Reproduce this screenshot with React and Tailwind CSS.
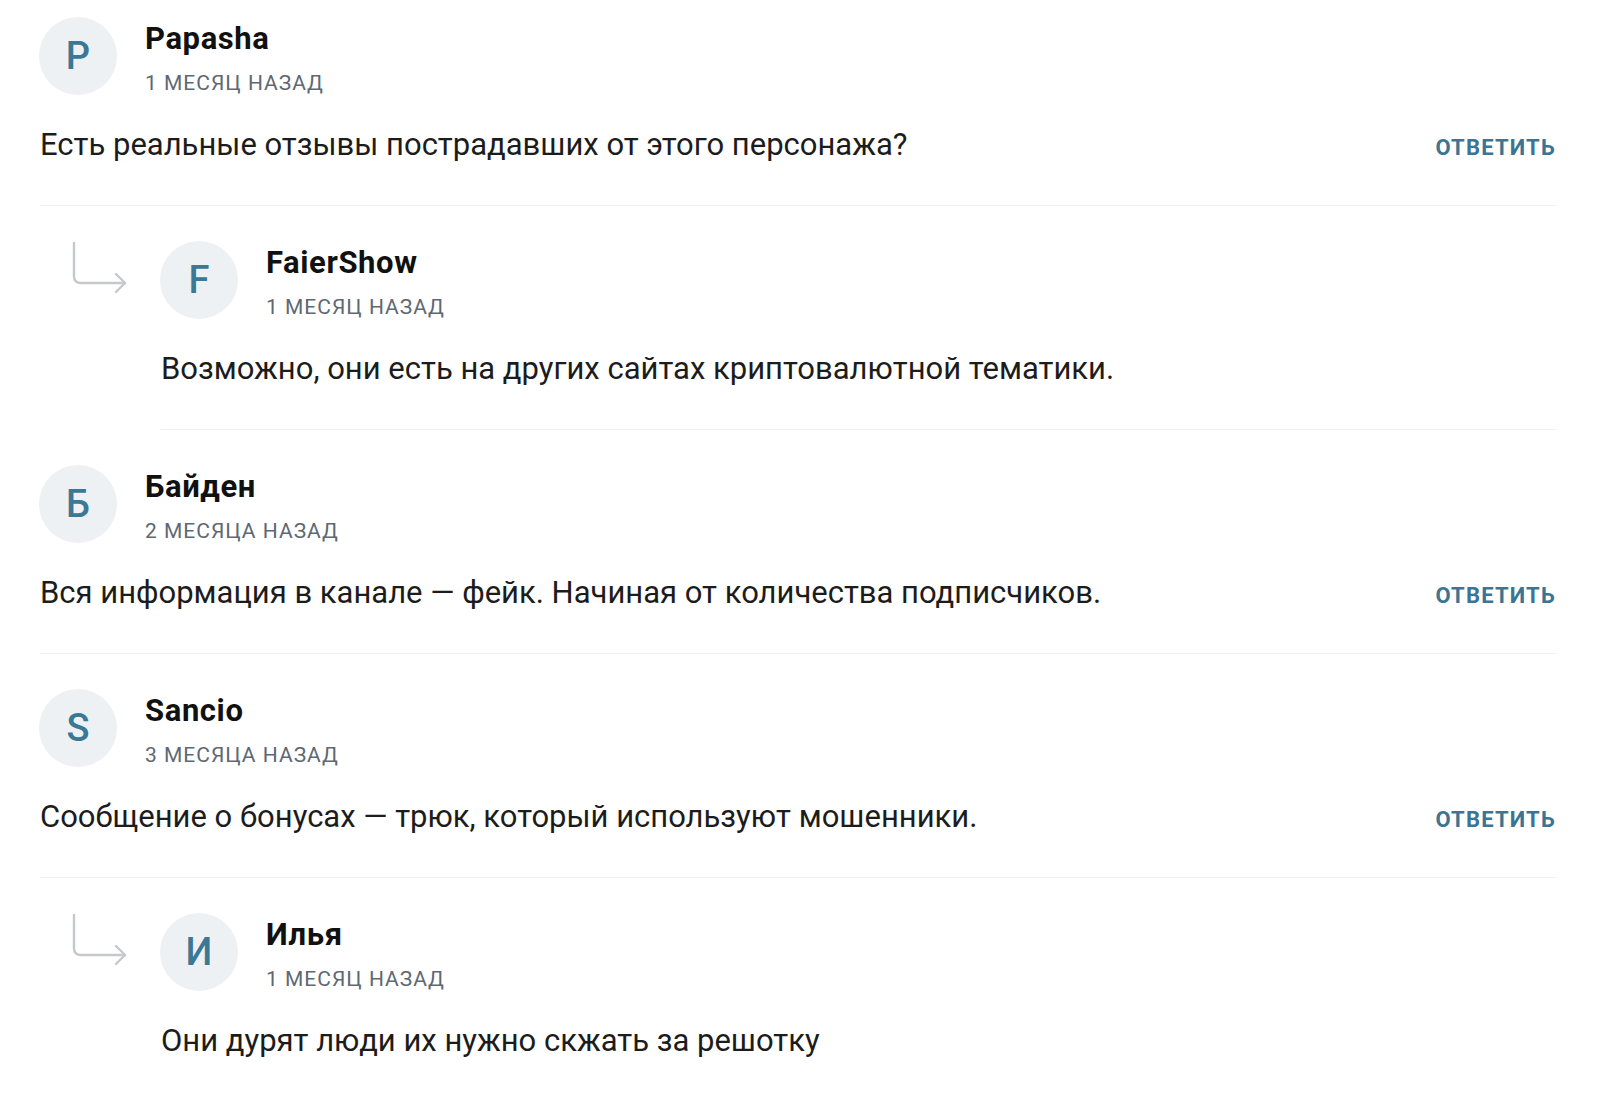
import React from 'react';

const comments = [
  {
    initial: 'P',
    name: 'Papasha',
    date: '1 месяц назад',
    text: 'Есть реальные отзывы пострадавших от этого персонажа?',
    replies: [
      {
        initial: 'F',
        name: 'FaierShow',
        date: '1 месяц назад',
        text: 'Возможно, они есть на других сайтах криптовалютной тематики.',
      },
    ],
  },
  {
    initial: 'Б',
    name: 'Байден',
    date: '2 месяца назад',
    text: 'Вся информация в канале — фейк. Начиная от количества подписчиков.',
    replies: [],
  },
  {
    initial: 'S',
    name: 'Sancio',
    date: '3 месяца назад',
    text: 'Сообщение о бонусах — трюк, который используют мошенники.',
    replies: [
      {
        initial: 'И',
        name: 'Илья',
        date: '1 месяц назад',
        text: 'Они дурят люди их нужно скжать за решотку',
      },
    ],
  },
];

const ReplyArrow = () => (
  <svg width="56" height="56" viewBox="0 0 56 56" fill="none" className="ml-[31px]">
    <path
      d="M3 3 V36 Q3 43 10 43 H54"
      stroke="#c6c9cc"
      strokeWidth="2.4"
      strokeLinecap="round"
      strokeLinejoin="round"
    />
    <path
      d="M45 34 L54 43 L45 52"
      stroke="#c6c9cc"
      strokeWidth="2.4"
      strokeLinecap="round"
      strokeLinejoin="round"
    />
  </svg>
);

const Header = ({ initial, name, date }) => (
  <div className="flex items-start">
    <div className="flex h-[78px] w-[78px] shrink-0 items-center justify-center rounded-full bg-[#eef1f3] text-[38px] font-medium text-[#3b7896] -ml-px">
      {initial}
    </div>
    <div className="ml-[28px]">
      <div className="mt-[4px] text-[31px] font-bold leading-[36px] tracking-[0.6px] text-[#111]">{name}</div>
      <div className="mt-[14px] text-[21px] uppercase leading-[24px] tracking-[1px] text-[#5e6872]">
        {date}
      </div>
    </div>
  </div>
);

const Comment = ({ comment, first, reply, last }) => (
  <div
    className={`pb-[42px] ${last ? '' : 'border-b border-[#eef0f2]'} ${first ? 'pt-[17px]' : 'pt-[35px]'}`}
  >
    <Header {...comment} />
    <div className="mt-[32px] flex items-baseline justify-between">
      <p className="text-[31px] leading-[36px] text-[#1c1c1c]">{comment.text}</p>
      {!reply && (
        <button className="text-[22px] font-bold uppercase leading-[24px] tracking-[1.2px] text-[#3b7593]">
          Ответить
        </button>
      )}
    </div>
  </div>
);

export default function App() {
  return (
    <div className="min-h-screen bg-white pl-[40px] pr-[44px] font-['Roboto',sans-serif]">
      {comments.map((c, i) => (
        <div key={c.name}>
          <Comment comment={c} first={i === 0} />
          {c.replies.map((r) => (
            <div key={r.name} className="flex">
              <div className="w-[121px] shrink-0 pt-[34px]">
                <ReplyArrow />
              </div>
              <div className="flex-1">
                <Comment comment={r} reply last={i === comments.length - 1} />
              </div>
            </div>
          ))}
        </div>
      ))}
    </div>
  );
}
